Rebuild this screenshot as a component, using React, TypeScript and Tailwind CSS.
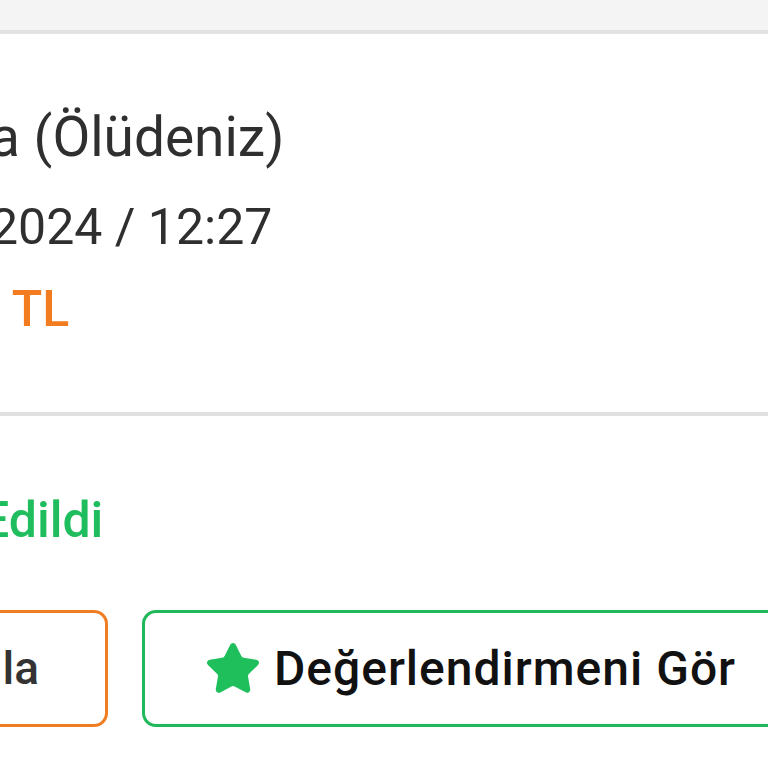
import React from "react";
import { Star } from "lucide-react";

export default function App() {
  return (
    <div className="w-[768px] h-[768px] overflow-hidden bg-white font-['Roboto',sans-serif]">
      <div className="h-[34px] bg-[#f4f4f4] border-b-[4px] border-[#e2e2e2]" />
      <div className="flex flex-col pt-[71px] pb-[71px]">
        <p className="ml-[-10px] whitespace-nowrap text-[55px] leading-[64px] text-[#2f2f2f]">a (Ölüdeniz)</p>
        <p className="ml-[-10px] mt-[26px] whitespace-nowrap text-[50px] leading-[64px] text-[#2f2f2f]">2024 / 12:27</p>
        <p className="ml-[-28px] mt-[18px] whitespace-nowrap text-[50px] leading-[64px] font-medium text-[#f27c1f]">0 TL</p>
      </div>
      <div className="h-[4px] bg-[#e0e0e0]" />
      <div className="flex flex-col">
        <p className="ml-[-19px] mt-[74px] whitespace-nowrap text-[50px] leading-[60px] font-medium text-[#1fbd5d]">Edildi</p>
        <div className="mt-[60px] flex gap-[34px]">
          <div className="ml-[-192px] w-[300px] h-[117px] shrink-0 flex items-center justify-end pr-[66px] rounded-[14px] border-[3.5px] border-[#f07d22]">
            <span className="text-[46px] font-medium text-[#333333] whitespace-nowrap">la</span>
          </div>
          <div className="w-[656px] h-[117px] shrink-0 flex items-center justify-center gap-[12px] rounded-[14px] border-[3.5px] border-[#1fb85a]">
            <Star size={58} strokeWidth={1.5} fill="#1fbf5c" color="#1fbf5c" />
            <span className="text-[48px] tracking-[1px] font-medium text-[#111111] whitespace-nowrap">Değerlendirmeni Gör</span>
          </div>
        </div>
      </div>
    </div>
  );
}
